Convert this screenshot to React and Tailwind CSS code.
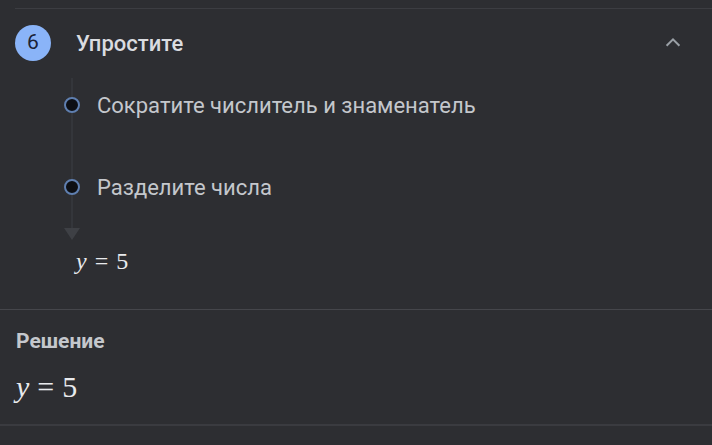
export default function App() {
  return (
    <div className="w-[712px] h-[445px] overflow-hidden bg-[#2d2e32] text-[#bdc1c6] font-['Roboto','Noto_Sans',sans-serif]">
      <div className="pt-[8px] pl-[15px]">
        <div className="h-px bg-[#3c3d42]" />
      </div>
      <div className="flex items-center h-[70px] pl-[15px] pr-[28px] -mt-[1px]">
        <div className="w-[36px] h-[36px] rounded-full bg-[#8ab4f8] flex items-center justify-center text-[#1a2336] text-[21px]">6</div>
        <div className="ml-[25px] text-[22px] font-medium text-[#dadce0] flex-1">Упростите</div>
        <svg width="22" height="22" viewBox="0 0 24 24" className="text-[#9aa0a6]">
          <path d="M5 15l7-7 7 7" fill="none" stroke="currentColor" strokeWidth="2.2" />
        </svg>
      </div>
      <div className="relative pl-[64px] pt-[13px] h-[231px]">
        <div className="absolute left-[71px] top-0 w-[2px] h-[150px] bg-[#34363b]" />
        <svg className="absolute left-[64px] top-[150px]" width="16" height="14" viewBox="0 0 16 14">
          <path d="M0 0h16L8 12z" fill="#3e4045" />
        </svg>
        <div className="flex items-center h-[28px]">
          <div className="relative w-[16px] h-[16px] rounded-full bg-[#0d0f14] border-[2px] border-[#5f7fb0]" />
          <div className="ml-[17px] text-[22px] text-[#c4c7cc]">Сократите числитель и знаменатель</div>
        </div>
        <div className="flex items-center h-[28px] mt-[54px]">
          <div className="relative w-[16px] h-[16px] rounded-full bg-[#0d0f14] border-[2px] border-[#5f7fb0]" />
          <div className="ml-[17px] text-[22px] text-[#c4c7cc]">Разделите числа</div>
        </div>
        <div className="mt-[42px] ml-[12px] text-[24px] text-[#e8eaed] flex items-baseline font-['Liberation_Serif',serif]">
          <i>y</i><span className="mx-[8px]">=</span><span>5</span>
        </div>
      </div>
      <div className="h-px bg-[#45464b]" />
      <div className="px-[16px] pt-[16px] h-[114px]">
        <div className="text-[21px] font-bold text-[#c4c7cc]">Решение</div>
        <div className="mt-[6px] text-[30px] text-[#e8eaed] flex items-baseline font-['Liberation_Serif',serif]">
          <i>y</i><span className="mx-[8px]">=</span><span>5</span>
        </div>
      </div>
      <div className="h-[2px] bg-[#3a3b40]" />
    </div>
  );
}
